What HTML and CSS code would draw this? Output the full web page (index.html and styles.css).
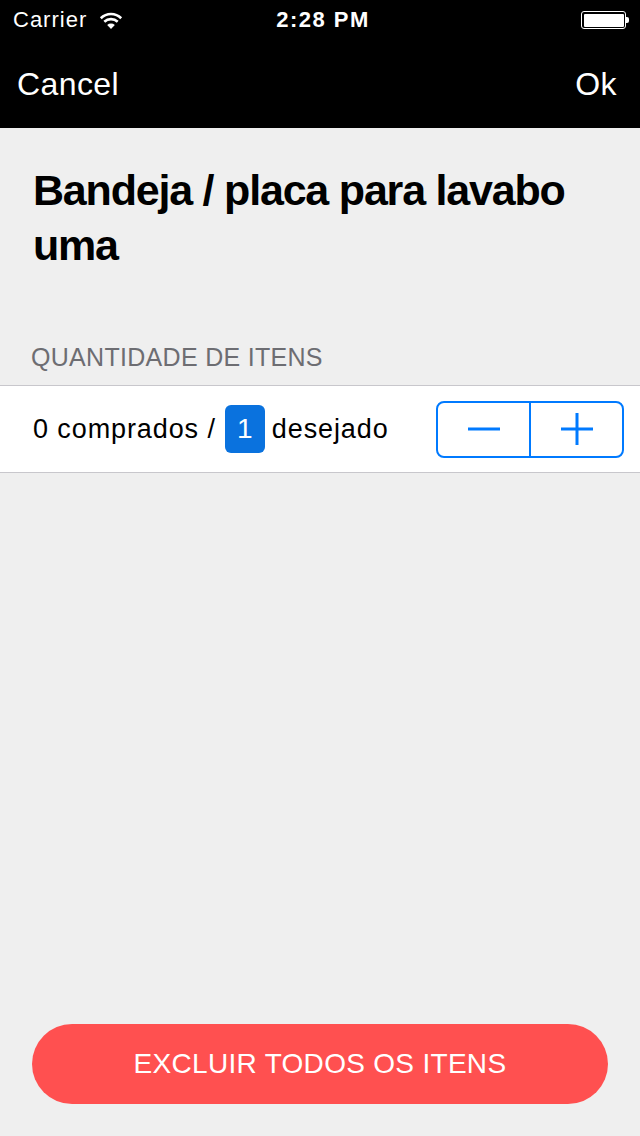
FILE: index.html
```html
<!DOCTYPE html>
<html lang="pt">
<head>
<meta charset="utf-8">
<link rel="stylesheet" href="styles.css">
</head>
<body>
<div class="screen">
  <div class="statusbar">
    <div class="sb-left">
      <span class="carrier">Carrier</span>
      <svg class="wifi" width="24" height="18" viewBox="0 0 24 18">
        <path d="M12 17 L8.2 12.9 A5.6 5.6 0 0 1 15.8 12.9 Z" fill="#fff"/>
        <path d="M5.3 9.8 A9.8 9.8 0 0 1 18.7 9.8" stroke="#fff" stroke-width="2.6" fill="none"/>
        <path d="M1.8 6.2 A14.6 14.6 0 0 1 22.2 6.2" stroke="#fff" stroke-width="2.6" fill="none"/>
      </svg>
    </div>
    <div class="sb-time">2:28 PM</div>
    <div class="sb-right">
      <div class="battery"><div class="battery-fill"></div></div>
      <div class="battery-tip"></div>
    </div>
  </div>
  <div class="navbar">
    <span class="nav-btn">Cancel</span>
    <span class="nav-btn">Ok</span>
  </div>
  <div class="content">
    <h1 class="title">Bandeja / placa para lavabo uma</h1>
    <div class="section-label">QUANTIDADE DE ITENS</div>
    <div class="row">
      <div class="row-text">
        <span>0 comprados /</span>
        <span class="badge">1</span>
        <span class="desired">desejado</span>
      </div>
      <div class="stepper">
        <div class="step">
          <svg width="34" height="34" viewBox="0 0 34 34"><rect x="1" y="15.5" width="32" height="3" fill="#007aff"/></svg>
        </div>
        <div class="step step-right">
          <svg width="34" height="34" viewBox="0 0 34 34"><rect x="1" y="15.5" width="32" height="3" fill="#007aff"/><rect x="15.5" y="1" width="3" height="32" fill="#007aff"/></svg>
        </div>
      </div>
    </div>
    <div class="spacer"></div>
    <div class="footer">
      <button class="delete-btn">EXCLUIR TODOS OS ITENS</button>
    </div>
  </div>
</div>
</body>
</html>
```
FILE: styles.css
```css
* { box-sizing: border-box; }
html, body { margin: 0; padding: 0; }
body {
  width: 640px;
  height: 1136px;
  background: #efefef;
  font-family: "Liberation Sans", Arial, sans-serif;
  overflow: hidden;
}
.screen {
  display: flex;
  flex-direction: column;
  height: 1136px;
}
.statusbar {
  height: 40px;
  background: #000;
  color: #fff;
  display: flex;
  align-items: center;
  justify-content: space-between;
  padding: 0 11px 0 13px;
  position: relative;
}
.sb-left { display: flex; align-items: center; gap: 12px; }
.carrier { font-size: 22px; letter-spacing: 1px; }
.wifi { margin-top: 1px; }
.sb-time {
  position: absolute;
  left: 0; right: 0;
  text-align: center;
  font-size: 22px;
  font-weight: bold;
  letter-spacing: 1.5px;
  padding-left: 6px;
  pointer-events: none;
}
.sb-right { display: flex; align-items: center; }
.battery {
  width: 45px;
  height: 18px;
  border: 1.5px solid #fff;
  border-radius: 3px;
  padding: 1.5px;
}
.battery-fill { width: 100%; height: 100%; background: #fff; border-radius: 1px; }
.battery-tip { width: 3px; height: 6px; background: #fff; border-radius: 0 2px 2px 0; }
.navbar {
  height: 88px;
  background: #000;
  color: #fff;
  display: flex;
  align-items: center;
  justify-content: space-between;
  padding: 0 23px 0 17px;
}
.nav-btn { font-size: 32px; letter-spacing: 0.4px; }
.content {
  flex: 1;
  display: flex;
  flex-direction: column;
}
.title {
  margin: 0;
  padding: 35px 40px 0 33px;
  font-weight: bold;
  font-size: 43px;
  line-height: 55px;
  letter-spacing: -1.2px;
  color: #000;
}
.section-label {
  margin-top: 69px;
  padding-left: 31px;
  font-size: 25px;
  letter-spacing: 0.3px;
  color: #6d6d72;
  line-height: 30px;
}
.row {
  margin-top: 13px;
  height: 88px;
  background: #fff;
  border-top: 1px solid #c8c7cc;
  border-bottom: 1px solid #c8c7cc;
  display: flex;
  align-items: center;
  justify-content: space-between;
  padding: 0 16px 0 33px;
}
.row-text {
  display: flex;
  align-items: center;
  font-size: 27px;
  letter-spacing: 0.9px;
  color: #000;
}
.badge {
  width: 40px;
  height: 48px;
  margin-left: 9px;
  background: #0a72de;
  color: #fff;
  border-radius: 6px;
  display: flex;
  align-items: center;
  justify-content: center;
  font-size: 28px;
  letter-spacing: 0;
}
.desired { margin-left: 7px; }
.stepper {
  width: 188px;
  height: 57px;
  border: 2px solid #007aff;
  border-radius: 8px;
  display: flex;
}
.step {
  flex: 1;
  display: flex;
  align-items: center;
  justify-content: center;
}
.step-right { border-left: 2px solid #007aff; }
.spacer { flex: 1; }
.footer { padding: 0 32px 32px 32px; }
.delete-btn {
  width: 100%;
  height: 80px;
  border: none;
  border-radius: 40px;
  background: #ff5050;
  color: #fff;
  font-family: "Liberation Sans", Arial, sans-serif;
  font-size: 28px;
  letter-spacing: 0.3px;
  display: flex;
  align-items: center;
  justify-content: center;
}
```
